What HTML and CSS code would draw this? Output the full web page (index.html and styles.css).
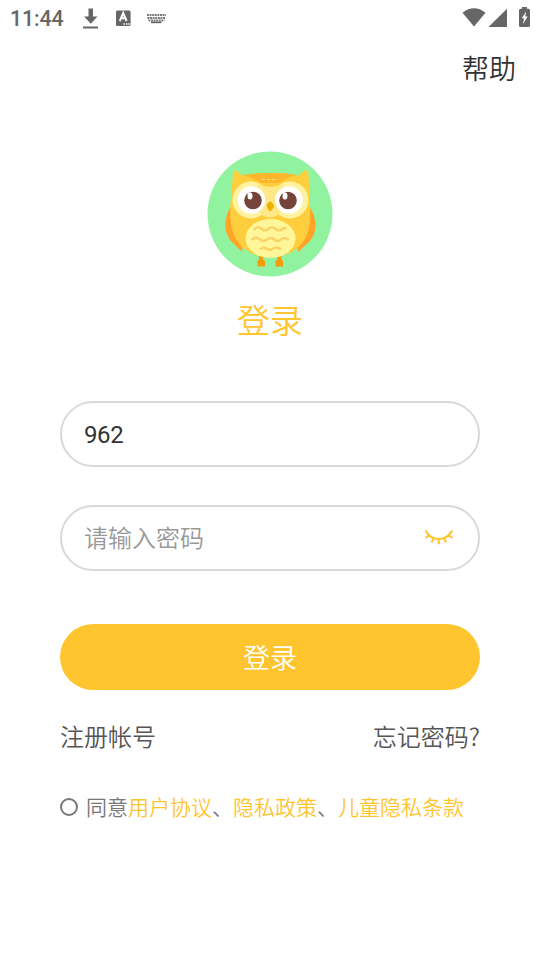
FILE: index.html
```html
<!DOCTYPE html>
<html lang="zh-CN">
<head>
<meta charset="utf-8">
<title>登录</title>
<link rel="stylesheet" href="styles.css">
</head>
<body>
<div class="status">
  <span class="time">11:44</span>
  <svg class="status-left" width="90" height="24" viewBox="80 6 90 24" fill="#666">
    <path d="M88.500 8.500h4.500v8h4.500l-6.700 7.200-6.700-7.200h4.400zM83 26.500h15v2H83z"/>
    <rect x="116" y="10.500" width="14.600" height="15.500" rx="1.500"/>
    <path d="M119.800 21l3.400-8 3.400 8M121 18.300h4.500" fill="none" stroke="#fff" stroke-width="2"/>
    <path d="M123.500 23.300h1.500v1.500h-1.500zM126 23.300h1.500v1.500H126zM128.300 23.300h1.500v1.500h-1.500z" fill="#fff"/>
    <path d="M147 15h19M147.500 18h18M148.500 20.500h16" fill="none" stroke="#777" stroke-width="1.800" stroke-dasharray="1.900 .7"/>
    <path d="M151 21.500h10.500v1.700H151z"/>
  </svg>
  <svg class="status-right" width="70" height="24" viewBox="462 6 70 24" fill="#666">
    <path d="M462.500 12.700Q474 3.800 485.500 12.700L474 26.500z"/>
    <path d="M507 8.800V27h-18.500z"/>
    <path d="M522 7h5v1.800h1.500q1.500 0 1.500 1.500v15.200q0 1.500-1.500 1.500h-8q-1.500 0-1.500-1.500V10.300q0-1.500 1.500-1.500h1.500z"/>
    <path d="M526 11.500l-4.200 6.800h2.200l-1 6 4.600-7.800h-2.300z" fill="#fff"/>
  </svg>
</div>
<header class="help">帮助</header>
<main class="login">
  <svg class="owl" viewBox="7 6 126 126">
    <circle cx="70" cy="69" r="62.500" fill="#91f3a0"/>
    <path d="M31 61C24 72 23 88 32 97L42 107 46 66zM109 61C117 72 118 88 109 97L98 107 94 66z" fill="#ffa426"/>
    <path d="M58.500 108h4.500v6.500l2 1.500v5.500h-7.500v-5.500l1.500-1.500zM77 108h4.500v6.500l1.500 1.500v5.500h-7.500v-5.500l2-1.500z" fill="#f59a0b"/>
    <path d="M33 28.500Q34 23 38 27L43 31Q56 27.500 70 28Q87 27.500 98 31L104 26Q108 23 108.500 29L109.500 53Q112 83 105 94Q94 112 70 112Q47 112 36 94Q28 82 31 53z" fill="#ffce3c"/>
    <path d="M42 30Q70 26 98 30Q86 32 79 38H61Q52 32 42 30z" fill="#ffb62b"/>
    <path d="M62 34.500h16" stroke="#ffe589" stroke-width="1.200" stroke-dasharray="3 2"/>
    <circle cx="51" cy="55" r="18.500" fill="#fff3a2"/><circle cx="90" cy="55" r="18.500" fill="#fff3a2"/>
    <path d="M57 39Q70 45 84 39L80 68Q70 77 60 68z" fill="#ffe889"/>
    <circle cx="51.500" cy="55" r="13.800" fill="#fff"/><circle cx="89" cy="55" r="13.800" fill="#fff"/>
    <circle cx="53" cy="55.500" r="8.800" fill="#74443a"/><circle cx="88" cy="55.500" r="8.800" fill="#74443a"/>
    <ellipse cx="50" cy="51" rx="2.500" ry="3.500" fill="#fff"/><ellipse cx="85" cy="51" rx="2.500" ry="3.500" fill="#fff"/>
    <path d="M66.500 60Q70 53 74 60Q74 64 70 66.500Q67 64 66.500 60z" fill="#edb000"/>
    <ellipse cx="70.500" cy="93.500" rx="25" ry="19.500" fill="#fff69a"/>
    <path d="M54 85q3-4.500 7-1.500 4 4 8 0 3-2.500 6 0 4 4 8 0 2-1 3 1M51.500 95q4-4 8-1 4 4 8 0 3-2 6 0 4 4 8 0 4-2.500 7 1M60 104.500q3-3.500 6-1 4 2.500 7 0 4-2.500 8 1" fill="none" stroke="#fad368" stroke-width="2.500"/>
  </svg>
  <h1 class="title">登录</h1>
  <div class="field account"><span>962</span></div>
  <div class="field password"><span>请输入密码</span>
    <svg width="32" height="20" viewBox="423 527 32 20" fill="none" stroke="#ffc52f" stroke-width="2"><path d="M425.500 530.500Q430 539 438.800 539T452.200 530.500M429 535l-3.500 3M433.500 538l-1.800 4.500M438.800 539v5.300M443.800 538l2.200 4.500M448.500 535l4 3"/></svg>
  </div>
  <div class="submit">登录</div>
  <div class="links"><span>注册帐号</span><span>忘记密码?</span></div>
  <div class="terms"><i class="radio"></i><span>同意<b>用户协议</b>、<b>隐私政策</b>、<b>儿童隐私条款</b></span></div>
</main>
</body>
</html>
```
FILE: styles.css
```css
* { box-sizing: border-box; }
body {
  margin: 0;
  width: 540px;
  height: 960px;
  overflow: hidden;
  background: #fff;
  color: #333;
  font-family: "Noto Sans CJK SC", sans-serif;
  font-weight: 350;
}
svg { display: block; flex: none; }
.status {
  display: flex;
  height: 36px;
  padding: 6px 8px 0 9px;
}
.time {
  width: 71px;
  padding-left: 1px;
  color: #666;
  font-family: Roboto, sans-serif;
  font-size: 21.3px;
  font-weight: 500;
  line-height: 25px;
  letter-spacing: -.1px;
}
.status-right { margin-left: auto; }
.help {
  height: 64px;
  padding-right: 24px;
  text-align: right;
  font-size: 27px;
  line-height: 64px;
}
.login {
  display: flex;
  flex-direction: column;
  padding: 51px 60px 0;
}
.owl { width: 126px; height: 126px; align-self: center; }
.title {
  margin: 17px 0 0;
  height: 50px;
  color: #ffc52f;
  font-size: 33px;
  font-weight: 350;
  line-height: 50px;
  text-align: center;
}
.field {
  display: flex;
  align-items: center;
  justify-content: space-between;
  height: 66px;
  padding: 0 23px 0 22px;
  border: 2px solid #d9d9d9;
  border-radius: 33px;
  font-size: 24px;
  line-height: 36px;
}
.account {
  margin-top: 57px;
  padding-top: 2px;
  font-family: Roboto, sans-serif;
  font-weight: 400;
  letter-spacing: -.4px;
}
.password { margin-top: 38px; padding-bottom: 2px; color: #999; }
.submit {
  height: 66px;
  margin-top: 53px;
  border-radius: 33px;
  background: #ffc52f;
  color: #fff;
  font-size: 27px;
  line-height: 66px;
  text-align: center;
}
.links {
  display: flex;
  justify-content: space-between;
  margin-top: 28px;
  color: #555;
  font-size: 24px;
  line-height: 36px;
}
.terms {
  display: flex;
  align-items: center;
  margin-top: 38px;
  color: #777;
  font-size: 21px;
  line-height: 32px;
  white-space: nowrap;
}
.terms span { margin-top: -2px; }
.terms b { color: #ffc52f; font-weight: 350; }
.radio {
  width: 18px;
  height: 18px;
  margin-right: 8px;
  border: 2px solid #777;
  border-radius: 50%;
}
```
